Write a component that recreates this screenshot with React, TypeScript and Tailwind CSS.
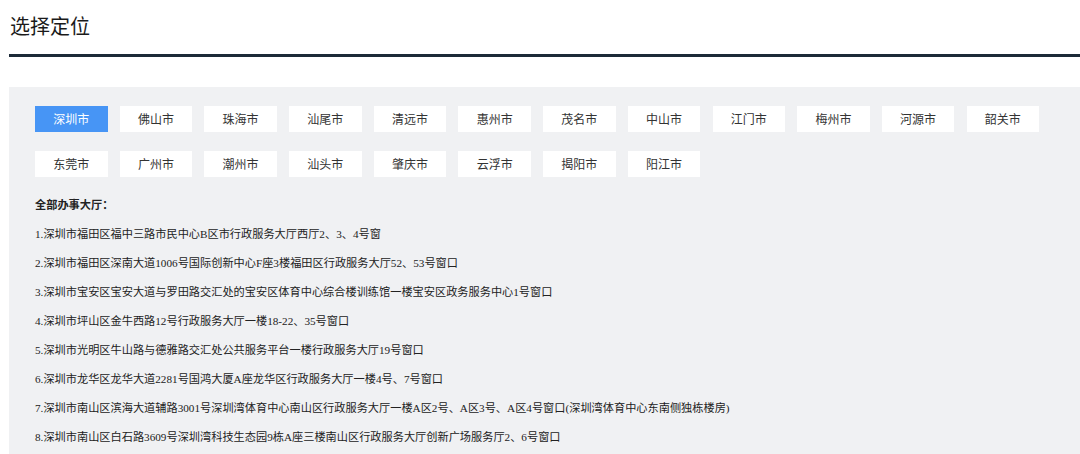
import React from "react";

const cities1 = ["深圳市", "佛山市", "珠海市", "汕尾市", "清远市", "惠州市", "茂名市", "中山市", "江门市", "梅州市", "河源市", "韶关市"];
const cities2 = ["东莞市", "广州市", "潮州市", "汕头市", "肇庆市", "云浮市", "揭阳市", "阳江市"];

const halls = [
  "1.深圳市福田区福中三路市民中心B区市行政服务大厅西厅2、3、4号窗",
  "2.深圳市福田区深南大道1006号国际创新中心F座3楼福田区行政服务大厅52、53号窗口",
  "3.深圳市宝安区宝安大道与罗田路交汇处的宝安区体育中心综合楼训练馆一楼宝安区政务服务中心1号窗口",
  "4.深圳市坪山区金牛西路12号行政服务大厅一楼18-22、35号窗口",
  "5.深圳市光明区牛山路与德雅路交汇处公共服务平台一楼行政服务大厅19号窗口",
  "6.深圳市龙华区龙华大道2281号国鸿大厦A座龙华区行政服务大厅一楼4号、7号窗口",
  "7.深圳市南山区滨海大道辅路3001号深圳湾体育中心南山区行政服务大厅一楼A区2号、A区3号、A区4号窗口(深圳湾体育中心东南侧独栋楼房)",
  "8.深圳市南山区白石路3609号深圳湾科技生态园9栋A座三楼南山区行政服务大厅创新广场服务厅2、6号窗口",
];

function CityButton({ name, active }: { name: string; active?: boolean }) {
  return (
    <div
      className={
        "w-[72.5px] h-[26px] flex items-center justify-center text-[12px] " +
        (active ? "bg-[#4795f5] text-white" : "bg-white text-[#333]")
      }
    >
      {name}
    </div>
  );
}

export default function App() {
  return (
    <div
      className="w-[1080px] h-[454px] bg-white overflow-hidden"
      style={{ fontFamily: '"Noto Sans CJK SC", "Noto Sans", sans-serif' }}
    >
      <div className="h-[54px] pl-[10px] pt-[16px]">
        <div className="text-[20px] leading-[22px] text-[#1a1a1a]" style={{ fontFamily: '"Liberation Serif", "Noto Sans CJK SC", serif' }}>
          选择定位
        </div>
      </div>
      <div className="ml-[9px] h-[3px] bg-[#1c2a38]" />
      <div className="h-[30px]" />
      <div className="ml-[9px] h-[367px] bg-[#f0f1f3] pl-[26px] pt-[19px]">
        <div className="flex flex-col gap-y-[19px]">
          <div className="flex gap-x-[12.2px]">
            {cities1.map((c, i) => (
              <CityButton key={c} name={c} active={i === 0} />
            ))}
          </div>
          <div className="flex gap-x-[12.2px]">
            {cities2.map((c) => (
              <CityButton key={c} name={c} />
            ))}
          </div>
        </div>
        <div
          className="mt-[14px] text-[11.2px] leading-[29px] text-[#222]"
          style={{ fontFamily: '"Liberation Serif", "Noto Sans CJK SC", serif' }}
        >
          <div className="font-bold">全部办事大厅：</div>
          {halls.map((h) => (
            <div key={h} className="whitespace-nowrap">{h}</div>
          ))}
        </div>
      </div>
    </div>
  );
}
